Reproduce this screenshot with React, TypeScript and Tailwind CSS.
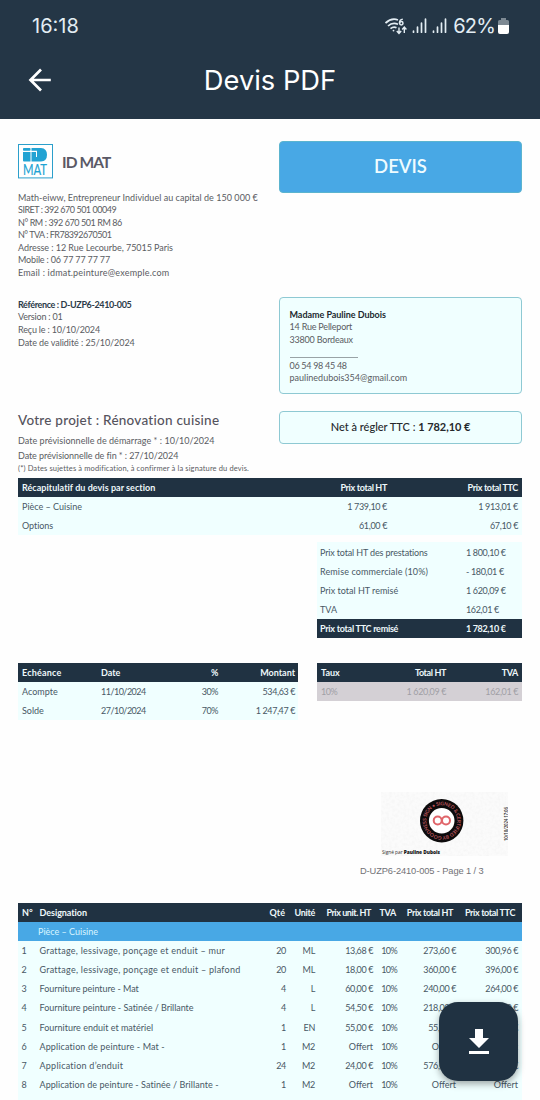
import React from "react";

const Line = ({ children, className = "" }: { children: React.ReactNode; className?: string }) => (
  <div className={"whitespace-pre " + className}>{children}</div>
);

const Signal = () => (
  <svg width="15" height="16" viewBox="0 0 15 16" stroke="#e3edf3" strokeWidth="1.7" strokeLinecap="round">
    <path d="M1.5 14.2v-1M5.5 14.2v-5M9.5 14.2v-9M13.5 14.2V1.2" />
  </svg>
);

const Logo = () => (
  <svg width="35" height="35" viewBox="0 0 35 35" className="shrink-0 overflow-visible">
    <rect x="0.5" y="0.5" width="34" height="33.4" fill="#fff" stroke="#2b9fcb" />
    <g fill="#22a3d3">
      <rect x="5" y="4" width="7.500" height="2.800" rx="0.800" />
      <path d="M5 8h7.500v9.500H6q-1 0-1-1z" />
      <path d="M13.500 4h9.500q6 0.500 6 6.800t-6 6.700h-9.500v-9.500h4.500v5h1v-6.200h-5.500z" />
    </g>
    <text x="5" y="31" fontSize="15" textLength="24" lengthAdjust="spacingAndGlyphs" fill="#22a3d3" stroke="#22a3d3" strokeWidth="0.200" fontFamily="Lato, sans-serif">MAT</text>
  </svg>
);

const Stamp = () => (
  <svg width="127" height="64" viewBox="0 0 127 64">
    <defs>
      <filter id="paper" x="0" y="0" width="100%" height="100%">
        <feTurbulence type="fractalNoise" baseFrequency="0.35" numOctaves="2" seed="4" />
        <feColorMatrix values="0 0 0 0 0.75  0 0 0 0 0.75  0 0 0 0 0.75  0.4 0 0 0 -0.150" />
      </filter>
      <path id="ring" d="M60.700 44.200a15.500 15.500 0 1 1 0.100 0" />
    </defs>
    <rect width="127" height="64" fill="#fbfbfb" />
    <rect width="127" height="64" filter="url(#paper)" />
    <circle cx="60.700" cy="28.700" r="21.700" fill="#0d0b0c" />
    <circle cx="60.700" cy="28.700" r="12.800" fill="#fff" />
    <g fill="none" stroke="#e0656a" strokeWidth="2">
      <circle cx="56.700" cy="28.500" r="4" />
      <circle cx="65" cy="28.500" r="4" />
    </g>
    <text fontSize="5" fontWeight="700" fill="#b9535a" fontFamily="Lato, sans-serif">
      <textPath href="#ring" textLength="96">GOODNESS SIGN • SIGNED &amp; CERTIFIED BY </textPath>
    </text>
    <text x="1" y="62" fontSize="4.800" fill="#333" fontFamily="Open Sans, sans-serif" textLength="58">
      Signé par <tspan fontWeight="800" fill="#111">Pauline Dubois</tspan>
    </text>
    <text transform="translate(126.500 49) rotate(-90)" fontSize="4.500" fontWeight="600" fill="#333" textLength="34" fontFamily="Open Sans, sans-serif">10/10/2024 17:06</text>
  </svg>
);

const items = [
  ["1", "Grattage, lessivage, ponçage et enduit – mur", "20", "ML", "13,68 €", "273,60 €", "300,96 €", "tracking-[0.240px]"],
  ["2", "Grattage, lessivage, ponçage et enduit – plafond", "20", "ML", "18,00 €", "360,00 €", "396,00 €", "tracking-[0.250px]"],
  ["3", "Fourniture peinture - Mat", "4", "L", "60,00 €", "240,00 €", "264,00 €", "tracking-[-0.050px]"],
  ["4", "Fourniture peinture - Satinée / Brillante", "4", "L", "54,50 €", "218,00 €", "239,80 €", "tracking-[-0.030px]"],
  ["5", "Fourniture enduit et matériel", "1", "EN", "55,00 €", "55,00 €", "60,50 €", ""],
  ["6", "Application de peinture - Mat -", "1", "M2", "Offert", "Offert", "Offert", "tracking-[0.120px]"],
  ["7", "Application d’enduit", "24", "M2", "24,00 €", "576,00 €", "633,60 €", "tracking-[0.240px]"],
  ["8", "Application de peinture - Satinée / Brillante -", "1", "M2", "Offert", "Offert", "Offert", "tracking-[0.060px]"],
];

const totals = [
  ["Prix total HT des prestations", "1 800,10 €", "tracking-[-0.150px]"],
  ["Remise commerciale (10%)", "- 180,01 €", "tracking-[0.120px]"],
  ["Prix total HT remisé", "1 620,09 €", ""],
  ["TVA", "162,01 €", ""],
];

const schedule = [
  ["Echéance", "Date", "%", "Montant"],
  ["Acompte", "11/10/2024", "30%", "534,63 €"],
  ["Solde", "27/10/2024", "70%", "1 247,47 €"],
];

const taxes = [
  ["Taux", "Total HT", "TVA"],
  ["10%", "1 620,09 €", "162,01 €"],
];

export default function App() {
  return (
    <div className="relative flex h-[1100px] w-[540px] flex-col overflow-hidden bg-[#fefefe] font-['Lato',sans-serif] text-[9px] text-[#5a5c62]">
      <header className="h-[118.500px] shrink-0 bg-[#243646]">
        <div className="flex h-[52px] items-center pl-8 pr-[31px] font-['Inter',sans-serif] text-[20px] text-[#e3edf3]">
          <span>16:18</span>
          <div className="ml-auto flex items-center">
            <svg width="22" height="17" viewBox="0 0 22 17" fill="none" stroke="#e3edf3" strokeWidth="1.700" className="mr-[5px]">
              <path d="M0.500 5Q6.500-0.500 13 2M3 8Q7.500 3.800 13 6.200M5.500 10.700Q8.500 8.200 11.500 9.800" />
              <circle cx="8.500" cy="12.600" r="0.900" fill="#e3edf3" stroke="none" />
              <path d="M17.800 1.300Q14.500 1.500 14.500 5.200" strokeWidth="1.500" />
              <circle cx="16.300" cy="5.300" r="1.700" strokeWidth="1.500" />
              <path d="M14 9.500v6M11.800 13l2.200 2.500 2.200-2.500M19.300 15v-6M17.200 11.500l2.100-2.500 2.100 2.500" strokeWidth="1.400" />
            </svg>
            <Signal />
            <span className="w-[5px]" />
            <Signal />
            <span className="ml-[6px] mr-[3px] tracking-[-0.800px]">62%</span>
            <svg width="11" height="16" viewBox="0 0 11 16">
              <path d="M3 0h5v2h1.500q1.500 0 1.500 1.500V7H0V3.500Q0 2 1.500 2H3z" fill="#7d8993" />
              <path d="M0 7h11v7q0 2-2 2H2q-2 0-2-2z" fill="#fff" />
            </svg>
          </div>
        </div>
        <div className="grid h-[57px] grid-cols-[68px_1fr_68px] items-center">
          <svg width="24" height="24" viewBox="0 0 24 24" className="-mt-px ml-7" fill="none" stroke="#fff" strokeWidth="2.700">
            <path d="M13 1.500 2.500 12 13 22.500M2.500 12h20.300" />
          </svg>
          <h1 className="text-center font-['Inter',sans-serif] text-[27.300px] leading-none text-white">Devis PDF</h1>
        </div>
      </header>

      <main className="flex flex-col px-[18px]">
        <section className="mt-[22px] grid h-[156px] grid-cols-[261px_243px]">
          <div>
            <div className="mt-[3px] flex h-[35px] items-center">
              <Logo />
              <span className="ml-[9px] pt-[3px] text-[15.500px] font-bold leading-none tracking-[-0.900px] text-[#5a5966]">ID MAT</span>
            </div>
            <div className="mt-[13px] leading-[12.600px]">
              <Line className="tracking-[0.040px]">Math-eiww, Entrepreneur Individuel au capital de 150 000 €</Line>
              <Line className="tracking-[-0.480px]">SIRET : 392 670 501 00049</Line>
              <Line className="tracking-[-0.420px]">N° RM : 392 670 501 RM 86</Line>
              <Line className="tracking-[-0.500px]">N° TVA : FR78392670501</Line>
              <Line className="tracking-[-0.050px]">Adresse : 12 Rue Lecourbe, 75015 Paris</Line>
              <Line className="tracking-[-0.160px]">Mobile : 06 77 77 77 77</Line>
              <Line className="tracking-[0.190px]">Email : idmat.peinture@exemple.com</Line>
            </div>
          </div>
          <div className="flex h-[52px] items-center justify-center rounded-[4px] border border-[#5bb4cf] bg-[#48a8e5] text-[18.500px] font-semibold text-[#effcff]">DEVIS</div>
        </section>

        <section className="grid h-[114px] grid-cols-[261px_243px]">
          <div className="mt-[2px] leading-[12.900px]">
            <Line className="font-bold tracking-[-0.370px] text-[#2c3b49]">Référence : D-UZP6-2410-005</Line>
            <Line className="tracking-[-0.200px]">Version : 01</Line>
            <Line className="tracking-[-0.170px]">Reçu le : 10/10/2024</Line>
            <Line className="tracking-[-0.060px]">Date de validité : 25/10/2024</Line>
          </div>
          <div className="h-[97px] rounded-[4px] border border-[#8ec9d3] bg-[#f0ffff] pl-[9.500px] pt-[11.500px] leading-[12.400px]">
            <Line className="font-bold tracking-[-0.040px] text-[#222a30]">Madame Pauline Dubois</Line>
            <Line className="tracking-[-0.200px]">14 Rue Pelleport</Line>
            <Line className="tracking-[-0.200px]">33800 Bordeaux</Line>
            <div className="mb-[2px] mt-[10.500px] h-px w-[68px] bg-[#99a3a6]" />
            <Line className="tracking-[-0.300px]">06 54 98 45 48</Line>
            <Line>paulinedubois354@gmail.com</Line>
          </div>
        </section>

        <section className="grid h-[67.500px] grid-cols-[261px_243px]">
          <div>
            <Line className="text-[13.500px] font-medium leading-[19px] tracking-[0.250px] text-[#55535d]">Votre projet : Rénovation cuisine</Line>
            <Line className="mt-[3px] leading-[15px] tracking-[0.030px]">Date prévisionnelle de démarrage * : 10/10/2024</Line>
            <Line className="leading-[15px] tracking-[-0.080px]">Date prévisionnelle de fin * : 27/10/2024</Line>
            <Line className="text-[7.500px] leading-[11px] tracking-[0.130px]">(*) Dates sujettes à modification, à confirmer à la signature du devis.</Line>
          </div>
          <div className="flex h-[33px] items-center justify-center whitespace-pre rounded-[4px] border border-[#8ec9d3] bg-[#f0ffff] pt-px text-[11px] font-medium text-[#25282c]">Net à régler TTC : <b className="tracking-[-0.050px]">1 782,10 €</b></div>
        </section>

        <section className="bg-[#f0ffff] text-[#485865]">
          <div className="grid h-[19.300px] grid-cols-[299px_70px_131px] items-center bg-[#203242] font-bold text-[#eef8fb]">
            <Line className="pl-1 tracking-[0.040px]">Récapitulatif du devis par section</Line>
            <Line className="text-right tracking-[-0.350px]">Prix total HT</Line>
            <Line className="text-right tracking-[-0.320px]">Prix total TTC</Line>
          </div>
          <div className="grid auto-rows-[19px] grid-cols-[299px_70px_131px] items-center">
            <Line className="pl-1">Pièce – Cuisine</Line>
            <Line className="text-right tracking-[-0.350px]">1 739,10 €</Line>
            <Line className="text-right tracking-[-0.350px]">1 913,01 €</Line>
            <Line className="pl-1 tracking-[-0.050px]">Options</Line>
            <Line className="text-right tracking-[-0.350px]">61,00 €</Line>
            <Line className="text-right tracking-[-0.350px]">67,10 €</Line>
          </div>
        </section>

        <section className="ml-[299px] mt-[7px] bg-[#f0ffff] text-[#485865]">
          {totals.map(([label, value, tracking]) => (
            <div key={label} className="grid h-[19.100px] grid-cols-[149px_1fr] items-center pt-px">
              <Line className={"pl-[3px] " + tracking}>{label}</Line>
              <Line className="tracking-[-0.350px]">{value}</Line>
            </div>
          ))}
          <div className="grid h-[19px] grid-cols-[149px_1fr] items-center bg-[#203242] pt-px font-bold text-[#eef8fb]">
            <Line className="pl-[3px] tracking-[-0.270px]">Prix total TTC remisé</Line>
            <Line className="tracking-[-0.350px]">1 782,10 €</Line>
          </div>
        </section>

        <section className="mt-[25px] grid h-[129.400px] grid-cols-[280px_205px] items-start gap-[19px] text-[#485865]">
          <div className="bg-[#f0ffff]">
            {schedule.map((r, i) => (
              <div key={r[0]} className={"grid h-[19.100px] grid-cols-[83px_60px_57px_77px] items-center pt-px " + (i === 0 ? "bg-[#203242] font-bold text-[#eef8fb]" : "")}>
                <Line className={"pl-1 " + (i === 0 ? "tracking-[0.200px]" : "")}>{r[0]}</Line>
                <Line className={i === 0 ? "" : "tracking-[-0.520px]"}>{r[1]}</Line>
                <Line className="text-right tracking-[-0.500px]">{r[2]}</Line>
                <Line className={"text-right " + (i === 0 ? "" : "tracking-[-0.400px]")}>{r[3]}</Line>
              </div>
            ))}
          </div>
          <div>
            {taxes.map((r, i) => (
              <div key={r[0]} className={"grid h-[19.100px] grid-cols-[50px_79px_72px] items-center pt-px " + (i === 0 ? "bg-[#203242] font-bold text-[#eef8fb]" : "bg-[#d4d0d5] text-[#a09fa5]")}>
                <Line className={"pl-1 " + (i === 0 ? "" : "tracking-[-0.500px]")}>{r[0]}</Line>
                <Line className="text-right tracking-[-0.380px]">{r[1]}</Line>
                <Line className="text-right tracking-[-0.380px]">{r[2]}</Line>
              </div>
            ))}
          </div>
        </section>

        <section className="ml-[363px] h-[110.800px]">
          <Stamp />
          <Line className="-ml-[21px] mt-[5px] font-['Liberation_Sans',sans-serif] text-[9.300px] leading-[20px] tracking-[-0.110px] text-[#727277]">D-UZP6-2410-005 - Page 1 / 3</Line>
        </section>

        <section className="h-[210px] bg-[#f0ffff] text-[#485865]">
          <div className="grid h-[19px] grid-cols-[21.500px_220.500px_25px_30px_56px_25px_57px_62px] items-center bg-[#203242] pt-px font-bold text-[#eef8fb]">
            <Line className="pl-1">N°</Line>
            <Line className="tracking-[-0.050px]">Designation</Line>
            <Line className="text-right">Qté</Line>
            <Line className="text-right tracking-[-0.300px]">Unité</Line>
            <Line className="text-right tracking-[-0.450px]">Prix unit. HT</Line>
            <Line className="text-right tracking-[-0.300px]">TVA</Line>
            <Line className="text-right tracking-[-0.380px]">Prix total HT</Line>
            <Line className="text-right tracking-[-0.350px]">Prix total TTC</Line>
          </div>
          <div className="flex h-[19px] items-center bg-[#48a8e5] pl-[20px] pt-px text-[#d9f5ff]">Pièce – Cuisine</div>
          {items.map((r) => (
            <div key={r[0]} className="grid h-[19.100px] grid-cols-[21.500px_220.500px_26px_29px_58px_24px_59px_62px] items-center pt-px">
              <Line className="pl-[3.500px]">{r[0]}</Line>
              <Line className={r[7]}>{r[1]}</Line>
              <Line className="text-right tracking-[-0.300px]">{r[2]}</Line>
              <Line className="text-right tracking-[-0.300px]">{r[3]}</Line>
              <Line className={"text-right " + (r[4] === "Offert" ? "" : "tracking-[-0.380px]")}>{r[4]}</Line>
              <Line className="text-right tracking-[-0.600px]">10%</Line>
              <Line className={"text-right " + (r[5] === "Offert" ? "" : "tracking-[-0.380px]")}>{r[5]}</Line>
              <Line className={"text-right " + (r[6] === "Offert" ? "" : "tracking-[-0.380px]")}>{r[6]}</Line>
            </div>
          ))}
        </section>
      </main>

      <button aria-label="Télécharger" className="absolute left-[439px] top-[1002px] flex h-[79px] w-[79px] items-center justify-center rounded-[19px] bg-[#203242] shadow-[0_3px_7px_rgba(0,0,0,0.350)]">
        <svg width="20" height="25" viewBox="0 0 20 25" fill="#fff">
          <path d="M6 0h8v9h6L10 19 0 9h6zM0 22h20v3H0z" />
        </svg>
      </button>
    </div>
  );
}
